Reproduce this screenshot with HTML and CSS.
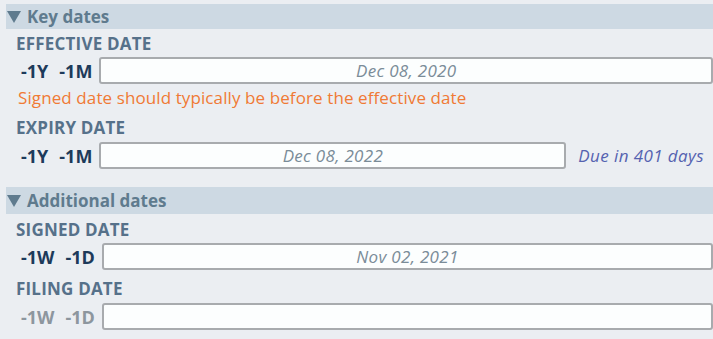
FILE: index.html
```html
<!DOCTYPE html>
<html>
<head>
<meta charset="utf-8">
<link rel="stylesheet" href="styles.css">
</head>
<body>
<div class="page">
  <div class="section-head first">
    <svg class="caret" width="14" height="12" viewBox="0 0 14 12"><polygon points="0,0 14,0 7,12" fill="#5f7b8e"/></svg>
    <span>Key dates</span>
  </div>
  <div class="field f1">
    <div class="label">EFFECTIVE DATE</div>
    <div class="row">
      <div class="prefix"><span>-1Y</span><span>-1M</span></div>
      <div class="input"><span class="value">Dec 08, 2020</span></div>
    </div>
    <div class="warning">Signed date should typically be before the effective date</div>
  </div>
  <div class="field f2">
    <div class="label">EXPIRY DATE</div>
    <div class="row">
      <div class="prefix"><span>-1Y</span><span>-1M</span></div>
      <div class="input"><span class="value">Dec 08, 2022</span></div>
      <div class="due">Due in 401 days</div>
    </div>
  </div>
  <div class="section-head second">
    <svg class="caret" width="14" height="12" viewBox="0 0 14 12"><polygon points="0,0 14,0 7,12" fill="#5f7b8e"/></svg>
    <span>Additional dates</span>
  </div>
  <div class="field f3">
    <div class="label">SIGNED DATE</div>
    <div class="row">
      <div class="prefix"><span>-1W</span><span>-1D</span></div>
      <div class="input"><span class="value">Nov 02, 2021</span></div>
    </div>
  </div>
  <div class="field f4">
    <div class="label">FILING DATE</div>
    <div class="row">
      <div class="prefix disabled"><span>-1W</span><span>-1D</span></div>
      <div class="input"></div>
    </div>
  </div>
</div>
</body>
</html>
```
FILE: styles.css
```css
html, body {
  margin: 0;
  padding: 0;
  background: #ebeef2;
}
body {
  font-family: "Open Sans", "Noto Sans", sans-serif;
  width: 713px;
  height: 339px;
  overflow: hidden;
}
.page {
  padding: 4px 0 0 6px;
}
.section-head {
  height: 25px;
  background: #cdd9e3;
  display: flex;
  align-items: center;
  gap: 6px;
  padding-left: 1px;
  color: #5f7b8e;
  font-weight: 700;
  font-size: 17px;
  line-height: 20px;
}
.section-head.second {
  height: 27px;
  margin-top: 18px;
}
.caret {
  display: block;
}
.field {
  padding-left: 10px;
}
.label {
  color: #56718a;
  font-weight: 700;
  font-size: 17px;
  letter-spacing: 0.2px;
  line-height: 20px;
}
.f1 .label { margin-top: 5px; }
.f2 .label { margin-top: 8px; }
.f3 .label { margin-top: 6px; }
.f4 .label { margin-top: 9px; }
.row {
  display: flex;
  align-items: center;
  height: 27px;
  margin-top: 3px;
}
.f2 .row, .f4 .row { margin-top: 4px; }
.prefix {
  display: flex;
  gap: 11px;
  padding-left: 5px;
  color: #1d3a5a;
  font-weight: 700;
  font-size: 18px;
  margin-right: 7px;
}
.prefix.disabled {
  color: #8d969e;
}
.input {
  flex: 1;
  height: 27px;
  box-sizing: border-box;
  border: 2px solid #a8abae;
  border-radius: 3px;
  background: #fcfefe;
  display: flex;
  align-items: center;
  justify-content: center;
}
.value {
  color: #7a8c98;
  font-style: italic;
  font-size: 17px;
  letter-spacing: 0.3px;
}
.due {
  color: #5562b0;
  font-style: italic;
  font-size: 17px;
  letter-spacing: 0.4px;
  padding: 0 9px 0 12px;
}
.warning {
  color: #f07a35;
  font-size: 17px;
  letter-spacing: 0.1px;
  line-height: 24px;
  margin-top: 2px;
  padding-left: 2px;
}
```
